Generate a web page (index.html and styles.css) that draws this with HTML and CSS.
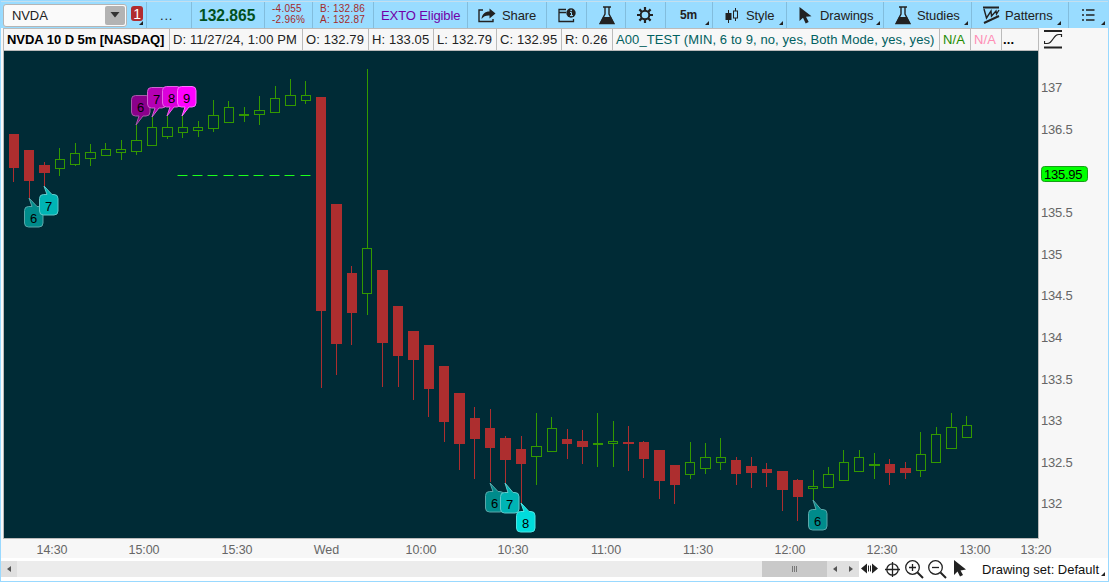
FILE: index.html
```html
<!DOCTYPE html>
<html lang="en">
<head>
    <meta charset="UTF-8" />
    <title>NVDA 5m</title>
    <link rel="stylesheet" href="styles.css">
</head>
<body>
    <div class="toolbar">
        <div class="item symbol">
            <div class="combo">
                <span>NVDA</span>
                <div class="combo-btn"><svg width="10" height="6"><path d="M0.500 0H9.500L5 5.500Z" fill="#333"/></svg></div>
            </div>
            <div class="link-num">1</div>
            <i class="corner"></i>
        </div>
        <div class="item dots">...</div>
        <div class="item last">132.865</div>
        <div class="item small change"><span>-4.055</span><span>-2.96%</span></div>
        <div class="item small bidask"><span>B: 132.86</span><span>A: 132.87</span></div>
        <div class="item exto">EXTO Eligible</div>
        <div class="item share">
            <svg width="18" height="15" viewBox="0 0 18 15"><path d="M5 2H1V13.500H15V11" fill="none" stroke="#222" stroke-width="1.400"/><path d="M3.500 11C4 6 7 3.500 11.500 3.500V0.500L17.500 5.500L11.500 10.500V7.500C8 7.300 5.500 8.300 3.500 11Z" fill="#222"/></svg>
            <span>Share</span>
        </div>
        <div class="item info">
            <svg width="18" height="15" viewBox="0 0 18 15"><path d="M8 1.500H1V13.500H15.500V11M1 4.500H8" fill="none" stroke="#222" stroke-width="1.300"/><circle cx="13" cy="5" r="4.700" fill="#222"/><path d="M12 4.500H13.500V7.500M12 7.600H15" stroke="#9df" fill="none"/><rect x="12.400" y="1.700" width="1.500" height="1.500" fill="#9df"/></svg>
        </div>
        <div class="item flask">
            <svg width="16" height="19" viewBox="0 0 16 19"><path d="M4 1H12M6 1V8L1 17.500H15L10 8V1" fill="none" stroke="#222" stroke-width="1.400"/><path d="M4 11H12L15.500 18H0.500Z" fill="#222"/></svg>
        </div>
        <div class="item gear">
            <svg width="16" height="16" viewBox="-8 -8 16 16"><path d="M0 -8V-4M0 8V4M-8 0H-4M8 0H4M-5.600 -5.600L-3 -3M5.600 5.600L3 3M-5.600 5.600L-3 3M5.600 -5.600L3 -3" stroke="#222" stroke-width="2.200"/><circle r="4.300" fill="none" stroke="#222" stroke-width="2"/></svg>
        </div>
        <div class="item frame"><b>5m</b><i class="corner"></i></div>
        <div class="item style">
            <svg width="14" height="15" viewBox="0 0 14 15"><path d="M3.500 2V15M10.500 0V3M10.500 10V13" stroke="#222"/><rect x="0.500" y="5" width="6" height="7" fill="#222"/><rect x="8.500" y="3" width="4" height="7" fill="none" stroke="#222"/></svg>
            <span>Style</span><i class="corner"></i>
        </div>
        <div class="item drawings">
            <svg width="13" height="17" viewBox="0 0 13 17"><path d="M0.500 0V14L4 10.800L6.700 16.500L9.700 15L7 9.700L12.500 9.200Z" fill="#222"/></svg>
            <span>Drawings</span><i class="corner"></i>
        </div>
        <div class="item studies">
            <svg width="16" height="19" viewBox="0 0 16 19"><path d="M4 1H12M6 1V8L1 17.500H15L10 8V1" fill="none" stroke="#222" stroke-width="1.400"/><path d="M4 11H12L15.500 18H0.500Z" fill="#222"/></svg>
            <span>Studies</span><i class="corner"></i>
        </div>
        <div class="item patterns">
            <svg width="17" height="18" viewBox="0 0 17 18"><path d="M0 1.500H16M1 17L16 10" stroke="#222" stroke-width="2"/><path d="M1 3L3.500 12L8 5L8.500 10L13 5L13.500 8L16 4" fill="none" stroke="#222" stroke-width="1.400"/></svg>
            <span>Patterns</span><i class="corner"></i>
        </div>
        <div class="item list">
            <svg width="13" height="12" viewBox="0 0 13 12"><path d="M0 1H2M0 6H2M0 11H2M4 1H12.500M4 6H12.500M4 11H12.500" stroke="#222" stroke-width="1.500"/></svg>
            <i class="corner"></i>
        </div>
    </div>

    <div class="status">
        <div class="cell c-title">NVDA 10 D 5m [NASDAQ]</div>
        <div class="cell c-date">D: 11/27/24, 1:00 PM</div>
        <div class="cell c-open">O: 132.79</div>
        <div class="cell c-high">H: 133.05</div>
        <div class="cell c-low">L: 132.79</div>
        <div class="cell c-close">C: 132.95</div>
        <div class="cell c-range">R: 0.26</div>
        <div class="cell c-study">A00_TEST (MIN, 6 to 9, no, yes, Both Mode, yes, yes)</div>
        <div class="cell c-na1">N/A</div>
        <div class="cell c-na2">N/A</div>
        <div class="cell c-more">...</div>
        <svg class="scale-icon" width="19" height="19" viewBox="0 0 19 19"><path d="M0 1H18M0 17.500H18" stroke="#222" stroke-width="2"/><path d="M0.500 11V13.500H3C6 13.500 7 12 9 9S12 4.500 15 4.500H17.500V7" fill="none" stroke="#222" stroke-width="1.200"/></svg>
    </div>

    <svg class="chart" id="chart" width="1107" height="507" viewBox="1 51 1107 507">
        <rect x="3" y="51" width="1036" height="488" fill="#bbb"/>
        <rect x="4" y="51" width="1034" height="487" fill="#002b36"/>
    </svg>

    <div class="bottom">
        <div class="scroll">
            <div class="arrow left"><svg width="4" height="6"><path d="M4 0V6L0 3Z" fill="#555"/></svg></div>
            <div class="track"></div>
            <div class="thumb"><i></i><i></i><i></i></div>
            <div class="arrow"><svg width="4" height="6"><path d="M4 0V6L0 3Z" fill="#555"/></svg></div>
            <div class="arrow"><svg width="4" height="6"><path d="M0 0V6L4 3Z" fill="#555"/></svg></div>
        </div>
        <svg class="tools" width="110" height="20" viewBox="859 559 110 20">
            <path d="M861 568.500L867 563.500V573.500ZM878 568.500L872 563.500V573.500Z" fill="#222"/>
            <path d="M868.500 565.500V571.500M870.500 565.500V571.500" stroke="#222"/>
            <circle cx="892.500" cy="569.500" r="5.700" fill="none" stroke="#222" stroke-width="1.300"/>
            <path d="M885 569.500H900M892.500 562V577" stroke="#222" stroke-width="1.300"/>
            <circle cx="912.500" cy="567.500" r="6.800" fill="none" stroke="#222" stroke-width="1.300"/>
            <path d="M909 567.500H916M912.500 564V571" stroke="#222" stroke-width="1.300"/>
            <path d="M917.500 572.500L923 578" stroke="#222" stroke-width="2"/>
            <circle cx="935.500" cy="567.500" r="6.800" fill="none" stroke="#222" stroke-width="1.300"/>
            <path d="M932 567.500H939" stroke="#222" stroke-width="1.300"/>
            <path d="M940.500 572.500L946 578" stroke="#222" stroke-width="2"/>
            <path d="M954 560V575L957.500 571.500L960 576.500L963 575L960.500 570.500L966 569.500Z" fill="#222"/>
        </svg>
        <span class="drawset">Drawing set: Default</span>
        <i class="corner"></i>
    </div>

    <script src="chart.js"></script>
</body>
</html>
```
FILE: styles.css
```css
body {
    margin: 0;
    width: 1107px;
    height: 580px;
    border: 1px solid #99d9ff;
    background-color: #fff;
    color: #222;
    font-family: "Liberation Sans", Arial, sans-serif;
    font-size: 13px;
    overflow: hidden;
}
.toolbar {
    display: flex;
    height: 27px;
    background-color: #99dcff;
    border-top: 1px solid #c4dfee;
    box-sizing: border-box;
}
.item {
    position: relative;
    display: flex;
    align-items: center;
    box-sizing: border-box;
    flex-shrink: 0;
    height: 26px;
    border-right: 1px solid #82bddd;
    letter-spacing: -0.1px;
    white-space: nowrap;
}
.corner {
    position: absolute;
    right: 3px;
    bottom: 3px;
    border-left: 4px solid transparent;
    border-bottom: 4px solid #222;
}
.symbol { width: 146px; padding-left: 2px; }
.combo {
    display: flex;
    align-items: center;
    justify-content: space-between;
    box-sizing: border-box;
    width: 124px;
    height: 23px;
    padding: 0 1px 0 8px;
    border: 1px solid #b5b5b5;
    border-radius: 3px;
    background-color: #fafafa;
}
.combo-btn {
    display: flex;
    align-items: center;
    justify-content: center;
    width: 20px;
    height: 19px;
    border-radius: 2px;
    background-color: #b3b3b3;
}
.link-num {
    margin: 0 0 3px 4px;
    width: 12px;
    height: 15px;
    line-height: 16px;
    border-radius: 3px;
    background-color: #b12c2f;
    color: #fff;
    font-size: 14px;
    text-align: center;
}
.dots { width: 45px; padding-left: 13px; letter-spacing: 0.8px; }
.last {
    width: 73px;
    padding: 1px 0 0 7px;
    color: #005020;
    font-size: 15.6px;
    font-weight: bold;
    letter-spacing: 0;
}
.small {
    flex-direction: column;
    justify-content: center;
    align-items: flex-start;
    padding-bottom: 2px;
    color: #a52a2a;
    font-size: 10px;
    line-height: 11px;
    letter-spacing: 0.25px;
}
.change { width: 48px; padding-left: 7px; }
.bidask { width: 61px; padding-left: 7px; }
.exto { width: 94px; padding-left: 7px; color: #7000a8; }
.share { width: 79px; padding-left: 10px; gap: 6px; }
.info { width: 40px; padding-left: 11px; }
.flask { width: 39px; padding-left: 12px; }
.gear { width: 40px; padding-left: 11px; }
.frame { width: 47px; padding-left: 14px; font-size: 12px; }
.style { width: 74px; padding-left: 12px; gap: 7px; }
.drawings { width: 97px; padding-left: 12px; gap: 8px; }
.studies { width: 88px; padding-left: 11px; gap: 6px; }
.patterns { width: 97px; padding-left: 11px; gap: 5px; }
.patterns .corner { right: 7px; }
.list { width: 39px; padding-left: 13px; border-right: none; }

.status {
    display: flex;
    height: 23px;
    padding-left: 2px;
    background-color: #f7f7f7;
}
.cell {
    box-sizing: border-box;
    flex-shrink: 0;
    height: 23px;
    padding-left: 3px;
    border: 1px solid #bbb;
    border-left: none;
    line-height: 22px;
    white-space: nowrap;
    letter-spacing: 0.1px;
}
.c-title { width: 167px; border-left: 1px solid #bbb; color: #000; font-weight: bold; letter-spacing: -0.05px; }
.c-date { width: 133px; }
.c-open { width: 66px; }
.c-high { width: 65px; }
.c-low { width: 63px; }
.c-close { width: 65px; }
.c-range { width: 51px; }
.c-study { width: 327px; color: #006060; }
.c-na1 { width: 31px; color: #228b00; }
.c-na2 { width: 31px; color: #ff8cb4; }
.c-more { width: 37px; padding-left: 1px; color: #000; font-weight: bold; }
.scale-icon { margin: 2px 0 0 5px; }

.chart {
    display: block;
    background-color: #f7f7f7;
}
.axis { fill: #666; font-size: 13px; letter-spacing: -0.2px; }
.time { font-size: 12.5px; letter-spacing: -0.05px; text-anchor: middle; }
.mark { fill: #000; font-size: 13px; text-anchor: middle; }
.tag { fill: #000; font-size: 13px; letter-spacing: -0.25px; }

.bottom {
    position: relative;
    display: flex;
    height: 23px;
}
.scroll {
    display: flex;
    width: 858px;
    height: 16px;
    margin-top: 3px;
    background-color: #ececec;
}
.arrow {
    display: flex;
    align-items: center;
    justify-content: center;
    width: 16px;
    background-color: #e0e0e0;
}
.track { flex: 1; }
.thumb {
    display: flex;
    align-items: center;
    justify-content: center;
    gap: 1px;
    width: 65px;
    background-color: #c9c9c9;
}
.thumb i { width: 1px; height: 6px; background-color: #777; }
.tools { margin-top: 1px; }
.drawset { margin-left: 13px; line-height: 23px; color: #111; white-space: nowrap; }
.bottom .corner { right: 3px; bottom: 5px; }
```
FILE: chart.js
```js
const chart = document.getElementById('chart');

function add(tag, attrs, text) {
    const el = document.createElementNS('http://www.w3.org/2000/svg', tag);
    for (const k in attrs) el.setAttribute(k, attrs[k]);
    if (text !== undefined) el.textContent = text;
    chart.appendChild(el);
}

// up, left, right, wick x, high, body top, body bottom, low
const candles = [
    [0,9,19,13,134,134,168,182], [0,24,34,29,150,150,181,198], [0,39,50,44,162,165,173,187],
    [1,55,65,59,148,159,169,176], [1,70,80,75,143,153,165,166], [1,85,96,90,144,152,159,166],
    [1,101,111,105,143,149,156,156], [1,116,126,121,140,149,153,160], [1,131,142,136,124,140,152,155],
    [1,147,157,152,116,127,146,146], [1,162,173,167,115,127,137,139], [1,178,188,182,115,127,133,138],
    [1,193,203,198,121,127,131,137], [1,208,219,213,100,115,129,132], [1,224,234,228,101,107,123,123],
    [1,239,249,244,107,114,116,122], [1,254,265,259,96,110,115,125], [1,270,280,275,86,98,113,113],
    [1,285,296,290,79,95,106,106], [1,301,311,305,81,95,101,104], [0,316,326,321,97,97,311,388],
    [0,331,342,336,204,204,344,375], [0,347,357,351,266,273,313,345], [1,362,372,367,69,248,294,315],
    [0,377,388,382,270,270,343,387], [0,393,403,398,306,306,356,387], [0,408,419,413,331,331,360,400],
    [0,424,434,428,345,345,389,417], [0,439,449,444,366,366,422,442], [0,454,465,459,393,393,444,470],
    [0,470,480,474,407,418,439,479], [0,485,495,490,409,428,448,482], [0,500,511,505,436,438,460,483],
    [0,516,526,521,436,449,464,503], [1,531,542,536,413,446,457,485], [1,547,557,551,417,428,452,452],
    [0,562,572,567,429,439,444,459], [0,577,588,582,430,441,447,464], [1,593,603,597,413,443,445,467],
    [1,608,618,613,421,441,444,467], [0,623,634,628,426,442,444,471], [0,639,649,643,441,442,459,478],
    [0,654,665,659,450,450,481,499], [0,670,680,674,465,465,485,504], [1,685,695,690,442,462,475,479],
    [1,700,711,705,443,457,469,474], [1,716,726,720,438,457,463,470], [0,731,741,736,457,460,474,485],
    [0,746,757,751,457,466,473,488], [0,762,772,766,463,469,473,487], [0,777,788,782,471,471,490,511],
    [0,793,803,797,479,480,497,521], [1,808,818,813,470,486,489,502], [1,823,834,828,467,474,488,488],
    [1,839,849,843,450,462,481,481], [1,854,864,859,450,457,472,472], [1,869,880,874,453,464,466,479],
    [0,885,895,889,459,464,473,485], [0,900,911,905,462,468,473,479], [1,916,926,920,432,454,471,477],
    [1,931,941,936,427,434,463,463], [1,946,957,951,413,427,449,449], [1,962,972,966,416,425,438,438]
];

candles.forEach(([up, l, r, x, high, top, bottom, low]) => {
    const color = up ? '#339900' : '#ad2e2f';
    if (top > high) add('rect', { x: x, y: high, width: 1, height: top - high, fill: color });
    if (low > bottom) add('rect', { x: x, y: bottom, width: 1, height: low - bottom, fill: color });
    if (up) {
        add('rect', { x: l + 0.5, y: top + 0.5, width: r - l - 1, height: bottom - top - 1, fill: 'none', stroke: color });
    } else {
        add('rect', { x: l, y: top, width: r - l, height: bottom - top, fill: color });
    }
});

// trigger level
candles.slice(11, 20).forEach(c => {
    add('rect', { x: c[1] - 1, y: 175, width: 11, height: 1, fill: '#1c8a22' });
    add('rect', { x: c[1], y: 175, width: 9, height: 1, fill: '#1cff1c' });
});

// count, left, top, tip x, tip y, fill, border
const bubbles = [
    [6,131,95,136,125,'#8b008b','#a65aa9'], [7,147,87,152,117,'#b400b4','#cd65cf'],
    [8,162,86,167,116,'#dc00dc','#e663e6'], [9,177,86,182,116,'#ff00ff','#ff70ff'],
    [6,24,206,29,198,'#008b8b','#5aa6a9'], [7,39,194,44,186,'#00b4b4','#60c8ca'],
    [6,485,491,490,483,'#008b8b','#5aa6a9'], [7,500,492,505,483,'#00b4b4','#60c8ca'],
    [8,516,511,521,503,'#00dcdc','#50e3e3'], [6,808,509,813,500,'#008b8b','#5aa6a9']
];

bubbles.forEach(([n, x, y, tx, ty, fill, border]) => {
    const l = x + 0.5, r = x + 19, t = y + 0.5, b = y + 21;
    const up = ty < y;
    const d = `M${l + 4} ${t}` + (up ? `H${x + 8}L${tx} ${ty}L${x + 13} ${t}` : '') +
        `H${r - 4}Q${r} ${t} ${r} ${t + 4}V${b - 4}Q${r} ${b} ${r - 4} ${b}` +
        (up ? '' : `H${x + 12}L${tx} ${ty}L${x + 8} ${b}`) +
        `H${l + 4}Q${l} ${b} ${l} ${b - 4}V${t + 4}Q${l} ${t} ${l + 4} ${t}Z`;
    add('path', { d: d, fill: fill, stroke: border, 'stroke-linejoin': 'bevel' });
    add('text', { x: x + 9.5, y: y + 17, class: 'mark' }, n);
});

[['137',87], ['136.5',129], ['135.5',212], ['135',254], ['134.5',295], ['134',337],
 ['133.5',379], ['133',420], ['132.5',462], ['132',503]].forEach(([label, y]) => {
    add('text', { x: 1041, y: y + 5, class: 'axis' }, label);
});

add('rect', { x: 1041.5, y: 166.5, width: 46, height: 15, rx: 3, fill: '#00ff00', stroke: '#16a016' });
add('text', { x: 1044, y: 179, class: 'tag' }, '135.95');

[['14:30',52], ['15:00',144], ['15:30',237], ['Wed',326.5], ['10:00',421], ['10:30',513], ['11:00',606],
 ['11:30',698], ['12:00',790], ['12:30',882], ['13:00',975], ['13:20',1036]].forEach(([label, x]) => {
    add('text', { x: x, y: 554, class: 'axis time' }, label);
});
```
